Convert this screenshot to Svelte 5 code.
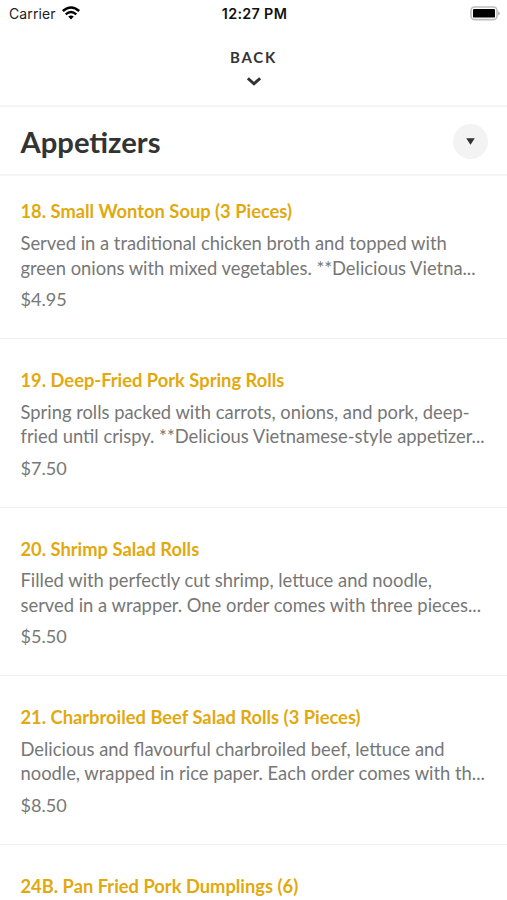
<script>
  const items = [
    {
      name: '18. Small Wonton Soup (3 Pieces)',
      lines: ['Served in a traditional chicken broth and topped with', 'green onions with mixed vegetables. **Delicious Vietna...'],
      price: '$4.95'
    },
    {
      name: '19. Deep-Fried Pork Spring Rolls',
      lines: ['Spring rolls packed with carrots, onions, and pork, deep-', 'fried until crispy. **Delicious Vietnamese-style appetizer...'],
      price: '$7.50'
    },
    {
      name: '20. Shrimp Salad Rolls',
      lines: ['Filled with perfectly cut shrimp, lettuce and noodle,', 'served in a wrapper. One order comes with three pieces...'],
      price: '$5.50'
    },
    {
      name: '21. Charbroiled Beef Salad Rolls (3 Pieces)',
      lines: ['Delicious and flavourful charbroiled beef, lettuce and', 'noodle, wrapped in rice paper. Each order comes with th...'],
      price: '$8.50'
    },
    { name: '24B. Pan Fried Pork Dumplings (6)', lines: [], price: '' }
  ];
</script>

<div class="screen">
  <div class="status">
    <div class="carrier">
      <span>Carrier</span>
      <svg width="18" height="14" viewBox="0 0 18 14">
        <path d="M0.8 5 Q9 -2 17.2 5" fill="none" stroke="#000" stroke-width="2.6" />
        <path d="M3.7 8.3 Q9 3.8 14.3 8.3" fill="none" stroke="#000" stroke-width="2.3" />
        <path d="M6.2 10.6 Q9 8.2 11.8 10.6 L9 13.4 Z" />
      </svg>
    </div>
    <span class="time">12:27 PM</span>
    <svg class="battery" width="30" height="15" viewBox="0 0 30 15">
      <rect x="1" y="1" width="26" height="12.6" rx="3.6" fill="none" stroke="#bdbdbd" stroke-width="1.6" />
      <rect x="3" y="3" width="22" height="8.6" rx="1.2" />
      <path d="M28.2 5 Q31.4 7.3 28.2 9.6 Z" fill="#aaa" />
    </svg>
  </div>

  <button class="back">
    <span>BACK</span>
    <svg width="14" height="9" viewBox="0 0 14 9">
      <path d="M0.9 1.3 L7 6.8 L13.1 1.3" fill="none" stroke="#333" stroke-width="2.9" />
    </svg>
  </button>

  <header>
    <h1>Appetizers</h1>
    <button class="toggle" aria-label="Choose category">
      <svg width="9" height="7" viewBox="0 0 9 7"><path d="M0.2 0.3 H8.8 L4.5 6.8 Z" fill="#333" /></svg>
    </button>
  </header>

  <main>
    {#each items as item}
      <article>
        <h2>{item.name}</h2>
        {#each item.lines as line}
          <p>{line}</p>
        {/each}
        <p class="price">{item.price}</p>
      </article>
    {/each}
  </main>
</div>

<style>
  .screen {
    height: 900px;
    overflow: hidden;
    background: #fff;
    color: #333;
    font-family: Lato, sans-serif;
  }

  .status {
    height: 27px;
    display: grid;
    grid-template-columns: 1fr auto 1fr;
    align-items: center;
    padding: 0 7px 0 9px;
    box-sizing: border-box;
    font-family: Inter, sans-serif;
    font-size: 14px;
    color: #222;
  }

  .carrier {
    display: flex;
    align-items: center;
    gap: 6px;
    letter-spacing: 0.1px;
  }

  .carrier svg {
    margin-top: -1px;
  }

  .time {
    font-size: 14.3px;
    font-weight: 600;
    letter-spacing: 0.35px;
    color: #111;
  }

  .battery {
    justify-self: end;
  }

  button {
    border: none;
    padding: 0;
    font-family: inherit;
    color: inherit;
  }

  .back {
    width: 100%;
    height: 80px;
    display: flex;
    flex-direction: column;
    align-items: center;
    padding: 21px 0 0;
    gap: 10px;
    box-sizing: border-box;
    background: #fff;
    border-bottom: 2px solid #f4f4f4;
    font-size: 15px;
    line-height: 19px;
    font-weight: 700;
    letter-spacing: 1.7px;
  }

  header {
    height: 69px;
    box-sizing: border-box;
    display: flex;
    align-items: center;
    justify-content: space-between;
    padding: 0 19px 0 20.5px;
    border-bottom: 2px solid #f4f4f4;
  }

  h1 {
    margin: 2px 0 0;
    font-size: 29.2px;
    font-weight: 700;
  }

  .toggle {
    width: 35px;
    height: 35px;
    margin-top: 2px;
    border-radius: 50%;
    background: #f3f3f3;
    display: flex;
    align-items: center;
    justify-content: center;
  }

  article {
    height: 168.6px;
    box-sizing: border-box;
    padding: 29px 0 0 20.5px;
    border-bottom: 1px solid #f0f0f0;
  }

  article:first-child {
    height: 163px;
    padding-top: 23.4px;
  }

  h2 {
    margin: 0 0 7.6px;
    font-size: 18.32px;
    line-height: 24px;
    font-weight: 700;
    color: #e2a90f;
  }

  p {
    margin: 0;
    font-size: 18.36px;
    line-height: 24.6px;
    color: #777;
    white-space: nowrap;
  }

  .price {
    margin-top: 7px;
    font-size: 18.1px;
  }
</style>
